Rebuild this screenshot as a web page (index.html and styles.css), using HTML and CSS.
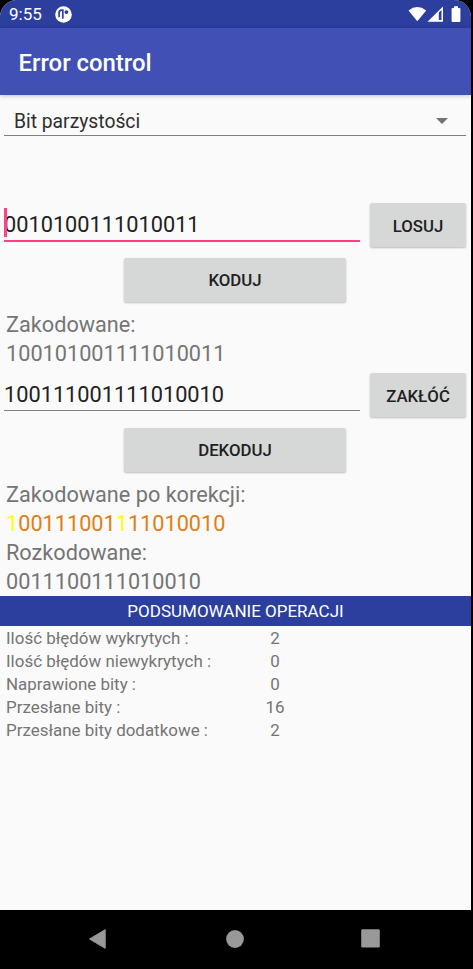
FILE: index.html
```html
<!DOCTYPE html>
<html lang="pl">
<head>
<meta charset="utf-8">
<title>Error control</title>
<link rel="stylesheet" href="styles.css">
</head>
<body>
<div class="screen">
  <header class="status">
    <span class="clock">9:55</span>
    <svg class="status-app" width="17" height="17" viewBox="0 0 17 17"><circle cx="8.5" cy="8.5" r="8.3" fill="#fff"/><path d="M4.1 11.2V6.6Q4.1 4.1 6.6 4.1H7.8V12.8" fill="none" stroke="#2c3e9e" stroke-width="1.7"/><circle cx="11.4" cy="6.1" r="1.9" fill="#2c3e9e"/></svg>
    <svg class="status-icons" width="54" height="18" viewBox="0 0 54 18"><path d="M.5 4.5Q9.3-2.3 18.2 4.5L9.3 15.2Z" fill="#fff"/><path d="M19.5 15.8L35 .6V15.8Z" fill="#fff"/><path d="M30.8 6.6L33.5 4V14H30.8Z" fill="#2c3e9e"/><path d="M46 .3H50V2H51.5Q52.4 2 52.4 3V15Q52.4 16 51.4 16H44.6Q43.6 16 43.6 15V3Q43.6 2 44.5 2H46Z" fill="#fff"/></svg>
  </header>
  <div class="appbar"><h1>Error control</h1></div>
  <main>
    <div class="spinner"><span>Bit parzystości</span><svg width="12" height="6" viewBox="0 0 12 6"><path d="M0 0H12L6 6Z" fill="#737373"/></svg></div>
    <div class="row row-first">
      <div class="field focused"><i class="caret"></i><span>0010100111010011</span></div>
      <button class="btn">LOSUJ</button>
    </div>
    <button class="btn wide">KODUJ</button>
    <div class="out">
      <p>Zakodowane:</p>
      <p>100101001111010011</p>
    </div>
    <div class="row row-second">
      <div class="field"><span>100111001111010010</span></div>
      <button class="btn">ZAKŁÓĆ</button>
    </div>
    <button class="btn wide">DEKODUJ</button>
    <div class="out">
      <p>Zakodowane po korekcji:</p>
      <p class="coded"><b>1</b>00111001<b>1</b>11010010</p>
      <p>Rozkodowane:</p>
      <p>0011100111010010</p>
    </div>
    <h2>PODSUMOWANIE OPERACJI</h2>
    <dl class="stats">
      <dt>Ilość błędów wykrytych :</dt><dd>2</dd>
      <dt>Ilość błędów niewykrytych :</dt><dd>0</dd>
      <dt>Naprawione bity :</dt><dd>0</dd>
      <dt>Przesłane bity :</dt><dd>16</dd>
      <dt>Przesłane bity dodatkowe :</dt><dd>2</dd>
    </dl>
  </main>
  <nav class="navbar">
    <svg width="18" height="20" viewBox="0 0 18 20"><path d="M16.2.7V19.3L.5 10Z" fill="#999" stroke="#999" stroke-linejoin="round"/></svg>
    <svg class="home" width="18" height="18" viewBox="0 0 18 18"><circle cx="9" cy="9" r="8.9" fill="#999"/></svg>
    <svg width="19" height="19" viewBox="0 0 19 19"><rect x=".2" y=".2" width="18.6" height="18.4" rx="1.4" fill="#999"/></svg>
  </nav>
</div>
</body>
</html>
```
FILE: styles.css
```css
* { box-sizing: border-box; }
body { margin: 0; background: #000; font-family: Roboto, "Liberation Sans", sans-serif; }
h1, h2, p, dl, dd { margin: 0; }
.screen {
  width: 471px; height: 969px; display: flex; flex-direction: column;
  background: #fafafa; border-radius: 17px 17px 0 0; overflow: hidden;
}
.status {
  height: 28px; flex: none; display: flex; align-items: center;
  padding: 0 9px; background: #2c3e9e; color: #fff;
}
.clock { width: 46px; font-size: 17px; line-height: 28px; }
.status-app { margin-top: 1px; }
.status-icons { margin: 1px 0 0 auto; }
.appbar {
  height: 67px; flex: none; padding-left: 18.5px; background: #4050b5; color: #fff;
  box-shadow: 0 1px 4px rgba(0, 0, 0, .22); position: relative;
}
h1 { font-size: 23.9px; font-weight: 500; line-height: 71px; }
main { flex: 1; display: flex; flex-direction: column; }
.spinner {
  height: 41px; margin: 0 5px 0 4px; padding: 12px 18px 0 10px;
  display: flex; align-items: center; justify-content: space-between;
  border-bottom: 1px solid #808080; font-size: 19.3px; color: #2f2f2f;
}
.row { display: flex; padding: 0 5px 0 4px; justify-content: space-between; }
.row-first { margin-top: 67px; }
.row-second { margin-top: 5.1px; }
.field {
  width: 356px; height: 38px; display: flex; align-items: center; padding-top: 6px;
  border-bottom: 1px solid #808080; font-size: 21.75px; color: #212121; position: relative;
}
.focused { height: 39px; padding-top: 5px; border-bottom: 2px solid #ff4081; }
.caret { position: absolute; left: 0; top: 5px; width: 3px; height: 29px; background: #ff4081; }
.btn {
  width: 96px; height: 44px; padding: 0; border: 0; border-radius: 2px;
  background: #d6d8d7; color: #212121; font: 500 16.8px/45px Roboto, sans-serif;
  box-shadow: 0 1px 2px rgba(0, 0, 0, .25);
}
.row .btn { line-height: 46px; }
.wide { width: 222px; margin: 10.5px 0 0 124px; }
.row-second + .wide { margin-top: 11px; }
.out { padding: 8px 6px 0; font-size: 21.7px; line-height: 29.1px; color: #757575; }
.coded { color: #dd7f15; }
.coded b { font-weight: 400; color: #ff0; }
h2 {
  height: 30px; margin-top: -.6px; background: #2c3e9e; color: #fff; text-align: center;
  font-size: 17px; font-weight: 400; line-height: 31px;
}
.stats {
  display: grid; grid-template-columns: 230px 78px; padding: 1.2px 0 0 6px;
  font-size: 16.95px; line-height: 23.1px; color: #757575;
}
.stats dt { white-space: nowrap; }
.stats dd { text-align: center; }
.navbar {
  height: 59px; flex: none; background: #000; display: flex; align-items: center;
  justify-content: space-between; padding: 0 91px 2px 89px;
}
.home { margin-left: 2px; }
```
